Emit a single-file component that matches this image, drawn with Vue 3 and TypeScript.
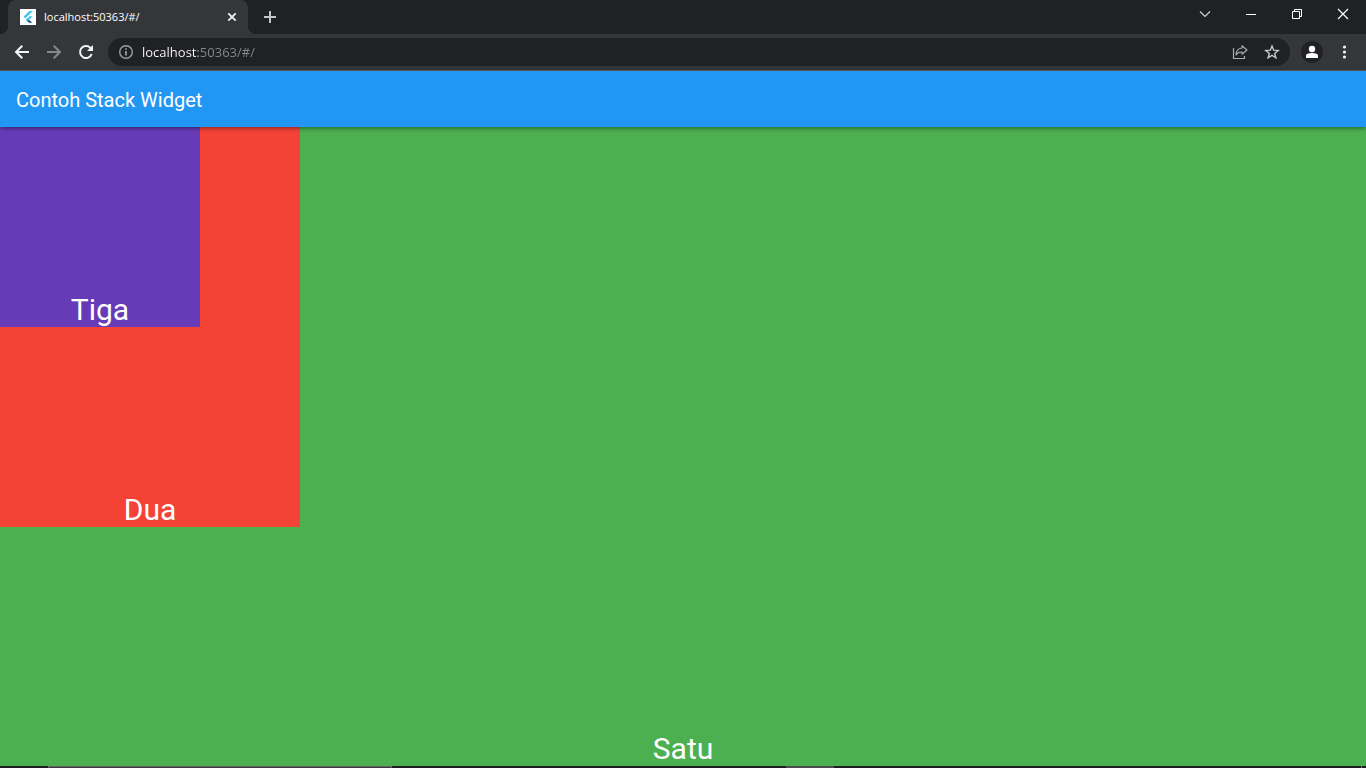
<script setup lang="ts">
import { ref } from 'vue'

interface Layer {
  label: string
  kind: string
}

const tabTitle = ref('localhost:50363/#/')
const address = ref('localhost:50363/#/')

const layers: Layer[] = [
  { label: 'Satu', kind: 'satu' },
  { label: 'Dua', kind: 'dua' },
  { label: 'Tiga', kind: 'tiga' },
]
</script>

<template>
  <div class="window">
    <header class="tab-strip">
      <div class="tab">
        <svg class="favicon" viewBox="0 0 16 16" aria-hidden="true">
          <rect width="16" height="16" fill="#fff" />
          <path d="M9.3 2h3.5L5.2 9.4 3.5 7.7z" fill="#42c5f5" />
          <path d="M9.3 7.2h3.5L9 10.8 7.4 9.2z" fill="#42c5f5" />
          <path d="M5.7 10.8 7.4 9.2 9 10.8 7.4 12.5z" fill="#29a9ee" />
          <path d="M7.4 12.5 9 10.8l3.300 3H9.2z" fill="#0b4f94" />
        </svg>
        <span class="tab-title">{{ tabTitle }}</span>
        <button class="icon-button tab-close" type="button" aria-label="Close tab">
          <svg width="16" height="16" viewBox="0 0 16 16">
            <path d="M4.300 4.300l7.400 7.400M11.700 4.300l-7.400 7.400" stroke="#f1f3f4" stroke-width="1.8" />
          </svg>
        </button>
      </div>
      <button class="icon-button new-tab" type="button" aria-label="New tab">
        <svg width="16" height="16" viewBox="0 0 16 16">
          <path d="M8 2v12M2 8h12" stroke="#c4c6c8" stroke-width="2" />
        </svg>
      </button>
      <div class="window-controls">
        <button class="control" type="button" aria-label="Search tabs">
          <svg width="12" height="12" viewBox="0 0 12 12">
            <path d="M1 3.5l5 5 5-5" fill="none" stroke="#d4d5d6" stroke-width="1.1" />
          </svg>
        </button>
        <button class="control" type="button" aria-label="Minimize">
          <svg width="12" height="12" viewBox="0 0 12 12">
            <path d="M1 6.5h10" stroke="#fff" />
          </svg>
        </button>
        <button class="control" type="button" aria-label="Restore">
          <svg width="12" height="12" viewBox="0 0 12 12">
            <path d="M1.500 3.500h7v7h-7zM3.500 3.500v-2h7v7h-2" fill="none" stroke="#fff" />
          </svg>
        </button>
        <button class="control" type="button" aria-label="Close">
          <svg width="12" height="12" viewBox="0 0 12 12">
            <path d="M1 1l10 10M11 1L1 11" stroke="#fff" stroke-width="1.2" />
          </svg>
        </button>
      </div>
    </header>

    <nav class="toolbar" aria-label="Browser toolbar">
      <button class="icon-button" type="button" aria-label="Back">
        <svg width="16" height="16" viewBox="0 0 16 16">
          <path d="M15 8H2.500M8.300 1.700L2 8l6.300 6.300" fill="none" stroke="#f1f3f4" stroke-width="2" />
        </svg>
      </button>
      <button class="icon-button" type="button" aria-label="Forward">
        <svg width="16" height="16" viewBox="0 0 16 16">
          <path d="M1 8h12.500M7.700 1.700L14 8l-6.300 6.300" fill="none" stroke="#87888a" stroke-width="2" />
        </svg>
      </button>
      <button class="icon-button" type="button" aria-label="Reload">
        <svg width="16" height="16" viewBox="0 0 16 16">
          <path d="M13.700 10A6 6 0 1 1 12.300 3.800L13.500 5" fill="none" stroke="#f1f3f4" stroke-width="2" />
          <path d="M15 1v6H9z" fill="#f1f3f4" />
        </svg>
      </button>
      <div class="omnibox">
        <button class="icon-button" type="button" aria-label="Site information">
          <svg width="16" height="16" viewBox="0 0 16 16">
            <circle cx="8" cy="8" r="6.300" fill="none" stroke="#9aa0a6" stroke-width="1.400" />
            <path d="M8 7v4.500M8 4.300v1.500" stroke="#9aa0a6" stroke-width="1.700" />
          </svg>
        </button>
        <input v-model="address" class="address" type="text" aria-label="Address" spellcheck="false" />
        <button class="icon-button share" type="button" aria-label="Share">
          <svg width="16" height="16" viewBox="0 0 16 16">
            <path d="M1.500 4v10.500h11V12" fill="none" stroke="#a9abae" stroke-width="1.200" />
            <path d="M10 1.800L15 6l-5 4.200V8C7 7.900 5.200 9 4 10.800 4.200 7.200 6.300 4.400 10 4z" fill="none" stroke="#a9abae" stroke-width="1.200" stroke-linejoin="round" />
          </svg>
        </button>
        <button class="icon-button" type="button" aria-label="Bookmark this tab">
          <svg width="16" height="16" viewBox="0 0 16 16">
            <path d="M8 2l1.700 4.200 4.500.3-3.500 2.900 1.200 4.400L8 11.400l-3.900 2.400 1.200-4.400L1.800 6.500l4.500-.3z" fill="none" stroke="#c4c6c9" stroke-width="1.400" />
          </svg>
        </button>
      </div>
      <button class="profile" type="button" aria-label="Profile">
        <svg width="16" height="16" viewBox="0 0 16 16">
          <circle cx="8" cy="5" r="3.200" fill="#fff" />
          <path d="M2 14v-2.200C2 9.800 5 9 8 9s6 .8 6 2.800V14z" fill="#fff" />
        </svg>
      </button>
      <button class="icon-button" type="button" aria-label="Browser menu">
        <svg width="16" height="16" viewBox="0 0 16 16" fill="#f1f3f4">
          <circle cx="8.500" cy="3" r="1.600" />
          <circle cx="8.500" cy="8" r="1.600" />
          <circle cx="8.500" cy="13" r="1.600" />
        </svg>
      </button>
    </nav>

    <div class="app-bar">
      <h1>Contoh Stack Widget</h1>
    </div>

    <main class="stack">
      <section v-for="layer in layers" :key="layer.kind" class="layer" :class="layer.kind">
        {{ layer.label }}
      </section>
    </main>

    <footer class="taskbar" aria-hidden="true">
      <span class="search-edge"></span>
      <span class="active-app"></span>
      <span class="desktop-edge"></span>
    </footer>
  </div>
</template>

<style>
body {
  margin: 0;
}
</style>

<style scoped>
.window {
  display: flex;
  flex-direction: column;
  min-height: 100vh;
  font-family: Roboto, sans-serif;
}

button {
  padding: 0;
  border: 0;
  background: transparent;
}

svg {
  display: block;
}

.icon-button {
  flex: none;
  width: 16px;
  height: 16px;
}

.tab-strip {
  display: flex;
  height: 34px;
  padding-left: 8px;
  background: #202124;
}

.tab {
  position: relative;
  box-sizing: border-box;
  display: flex;
  align-items: center;
  gap: 8px;
  width: 240px;
  padding: 0 8px 0 12px;
  border-radius: 8px 8px 0 0;
  background: #35363a;
}

.tab::before,
.tab::after {
  content: '';
  position: absolute;
  bottom: 0;
  width: 8px;
  height: 8px;
}

.tab::before {
  right: 100%;
  background: radial-gradient(circle at 0 0, transparent 8px, #35363a 8px);
}

.tab::after {
  left: 100%;
  background: radial-gradient(circle at 100% 0, transparent 8px, #35363a 8px);
}

.favicon {
  flex: none;
  width: 16px;
  height: 16px;
}

.tab-title {
  flex: 1;
  color: #fff;
  font: 500 11px/16px 'Open Sans', 'Noto Sans', sans-serif;
  white-space: nowrap;
}

.new-tab {
  align-self: center;
  margin-left: 14px;
}

.window-controls {
  display: flex;
  height: 28px;
  margin-left: auto;
}

.control {
  display: flex;
  align-items: center;
  justify-content: center;
  width: 46px;
}

.toolbar {
  box-sizing: border-box;
  display: flex;
  align-items: center;
  gap: 16px;
  height: 37px;
  padding: 0 14px;
  border-bottom: 1px solid #5a5b5e;
  background: #35363a;
}

.omnibox {
  box-sizing: border-box;
  display: flex;
  flex: 1;
  align-items: center;
  gap: 8px;
  height: 28px;
  margin-left: -2px;
  margin-right: -5px;
  padding: 0 10px;
  border-radius: 14px;
  background: #202124;
}

.share {
  margin-right: 8px;
}

.address {
  flex: 1;
  min-width: 0;
  height: 20px;
  padding: 0;
  border: 0;
  outline: 0;
  color: #fff;
  font: 500 13px/20px 'Open Sans', 'Noto Sans', sans-serif;
  background: linear-gradient(90deg, #fff 56px, #85898e 56px);
  background-clip: text;
  -webkit-text-fill-color: transparent;
}

.profile {
  display: flex;
  align-items: center;
  justify-content: center;
  width: 22px;
  height: 22px;
  margin-right: -3px;
  border-radius: 50%;
  background: #202124;
}

.app-bar {
  z-index: 1;
  display: flex;
  align-items: center;
  height: 56px;
  padding: 0 16px;
  background: #2196f3;
  box-shadow: 0 2px 4px -1px rgba(0, 0, 0, 0.3), 0 1px 5px rgba(0, 0, 0, 0.2);
}

h1 {
  margin: 0;
  padding-top: 2px;
  color: #fff;
  font-size: 20px;
  font-weight: 400;
  line-height: 24px;
}

.stack {
  display: grid;
  flex: 1;
}

.layer {
  grid-area: 1 / 1;
  display: flex;
  align-items: flex-end;
  justify-content: center;
  color: #fff;
  font-size: 30px;
  line-height: 35px;
}

.satu {
  background: #4caf50;
}

.dua {
  width: 300px;
  height: 400px;
  background: #f44336;
}

.tiga {
  width: 200px;
  height: 200px;
  background: #673ab7;
}

.taskbar {
  display: flex;
  height: 2px;
  background: #1e2020;
}

.search-edge {
  box-sizing: border-box;
  width: 344px;
  margin-left: 48px;
  border: 1px solid #626262;
  border-bottom: 0;
  background: #3a3a3a;
}

.active-app {
  width: 48px;
  margin-left: 394px;
  background: #4a4c4c;
}

.desktop-edge {
  width: 1px;
  margin-left: auto;
  margin-right: 4px;
  background: #767676;
}
</style>
